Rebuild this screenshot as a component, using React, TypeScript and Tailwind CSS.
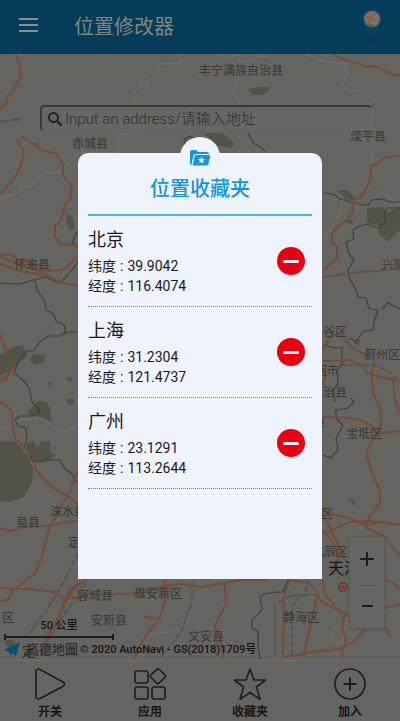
import type { ReactNode } from "react";

const roads = [
  "M16 54 20 66 21 78 15 86 13 92 8 95 7 102 0 108",
  "M333 54 345 60 360 64 366 67 376 66 385 71 393 75 400 75",
  "M22 137 30 142 36 146 42 151 55 153 60 158 63 166 63 175 70 184 72 187 70 200 64 206 64 212 60 222 55 226 55 236 60 244 77 245",
  "M16 140 22 147 24 153 20 168 13 180 0 194",
  "M0 254 10 255 20 260 40 266 47 271 62 270 70 264 77 257",
  "M0 264 20 271 45 275 60 282 77 286",
  "M0 257 22 266 44 272",
  "M0 333 8 357 12 370 0 383",
  "M12 370 6 380 0 377",
  "M0 402 6 405 12 412 12 424 15 438 25 448 33 456 36 470 50 485 60 492 68 496 78 504",
  "M78 471 72 485 68 496 62 505 54 520 50 526",
  "M0 528 12 531 25 526 50 526 64 522 78 521",
  "M50 526 46 540 42 558 35 573 20 585 13 590 8 600 0 601",
  "M0 588 13 589 30 589 45 591 55 592 65 599 80 597 90 594 125 594 145 592 165 586 180 584 200 587 225 583 240 580 267 580",
  "M87 579 75 588 65 600 60 615 50 630 44 643 40 658",
  "M80 582 70 590 64 606 48 640",
  "M165 580 165 602 160 618 150 630 143 640 134 659",
  "M144 616 152 618 160 618",
  "M225 584 226 604 215 625 220 640 224 659",
  "M283 657 284 595 290 580 305 582 312 585 322 602 345 613",
  "M283 657 300 655 310 652 330 650 342 648 355 640 363 632 363 625",
  "M317 596 312 618 306 645 303 657",
  "M345 613 342 628 346 640 342 650 342 659",
  "M323 580 326 596 340 612 360 622",
  "M323 530 335 545 338 560 330 572",
  "M326 520 335 538 345 560",
  "M323 534 350 522 370 521 400 525",
  "M323 510 335 515 350 518 365 525 382 522 400 525",
  "M365 527 385 537 400 556",
  "M385 580 392 582 400 590",
  "M385 608 400 604",
  "M385 628 390 636",
  "M400 155 383 158 380 162 372 166 370 180 367 187 362 195 352 203 353 212 345 222 338 226 332 233 332 243 337 246 337 258 323 270",
  "M323 350 330 337 340 333 345 340 355 350 364 354",
  "M323 361 350 360 362 365 367 373 380 377 400 381",
  "M374 361 372 373 373 393 380 408 381 415 380 430 372 441 367 452 368 460 373 475 380 493 380 503 370 517 365 525",
  "M380 433 400 431",
  "M393 380 395 400 400 412",
  "M323 417 348 418 360 420 370 425 377 431",
  "M323 385 326 375 323 370",
];

const thinRoads = [
  "M181 54 182 63 160 64 155 77 142 85 135 91 134 105",
  "M220 54 228 58 236 64 239 77 234 90 236 97 240 105",
  "M228 58 240 54M236 60 250 61 257 57 270 56",
  "M305 54 318 60 330 62 345 64 347 74 342 85 348 90 360 92 368 102 373 110 372 131",
  "M0 199 15 194 24 188 33 185 38 178 45 173 60 172 68 164 78 153 118 153 118 134 130 135 138 133",
  "M18 420 40 418 50 423 60 432 70 430 77 425",
  "M342 193 341 210 332 228 324 239",
  "M400 206 380 190",
  "M371 150 374 172 365 187 355 192",
  "M0 430 12 425",
  "M140 658 143 640 150 634 170 632 186 626 190 610",
  "M325 600 345 615 360 632M330 639 336 626 350 622 341 645Z",
];

const borders = [
  "M77 332 66 332 60 336 48 336 40 342 34 350 25 352 18 362 14 373 25 382 30 390 32 402 38 408 40 412 32 416 20 416 15 420 18 426 26 428 27 440 24 446 29 452 32 460 40 462 48 460 60 460 64 468 72 474 77 483",
  "M35 280 37 290 45 302 46 310 54 314 56 321 64 325 66 334",
  "M0 283 20 284 30 281 45 277 60 283 68 275 78 262",
  "M77 232 72 242 77 246",
  "M248 133 253 143 262 148 266 153",
  "M185 150 184 140 190 136 196 140",
  "M323 193 333 194 340 199 355 203 363 205 368 205 372 200 383 199 390 202 400 202",
  "M400 208 387 208 384 216 386 222 378 228 366 224 358 227 353 230 354 239 346 242 349 254 354 260 348 270 349 277 356 290 358 297 366 298 369 309 378 310 374 322 373 330",
  "M400 309 388 303 382 309",
  "M373 330 364 331 356 341 348 338",
  "M323 345 335 348 342 347 342 365 337 370 338 384 333 390 335 402",
  "M323 455 331 458 338 450 336 438 343 426 336 418 336 410 348 408 354 402 351 398",
  "M288 580 283 592 276 592 264 594 260 597 262 610 252 620 252 628 258 632 258 645 260 659",
];

const railways = [
  "M78 553 65 580 50 605 30 633",
  "M86 583 62 618 42 648",
  "M192 580 192 602 186 618 182 630 172 644 160 658",
  "M340 365 374 365 388 371 400 383",
  "M275 657 275 604 290 596 305 595 308 580",
  "M292 655 292 606 300 596 318 594",
];

const forests = [
  "M248 89 258 87 270 87 269 91 262 95 252 95Z",
  "M0 121 9 120 8 122 0 123ZM11 119 22 118 18 121 11 121Z",
  "M67 214 72 216 75 227 70 231 66 222Z",
  "M204 133 222 133 234 143 232 148 216 145Z",
  "M337 190 348 190 356 200 345 199Z",
  "M367 208 383 207 387 213 400 206 400 230 387 242 378 232 379 226 367 223Z",
  "M346 220 353 220 353 224 348 223Z",
  "M0 355 12 348 22 345 26 352 28 356 20 362 12 370 0 376Z",
  "M32 354 46 355 44 362 36 365 30 361Z",
  "M27 412 38 401 46 402 50 408 52 423 42 417 30 415Z",
  "M66 400 73 398 75 403 69 406ZM66 377 72 377 72 382 67 381ZM48 383 53 382 50 387Z",
  "M0 441 15 441 27 454 33 468 32 482 24 497 10 502 0 501Z",
  "M26 444 34 441 37 448 42 441 50 442 50 452 56 455 50 460 32 462 28 454Z",
  "M348 498 353 500 357 507 352 503Z",
  "M354 340 360 340 359 345 354 344Z",
  "M4 640 14 640 16 646 8 648Z",
];

const places: [string, number, number][] = [
  ["丰宁满族自治县", 199, 75],
  ["赤城县", 72, 148],
  ["滦平县", 350, 141],
  ["怀来县", 14, 269],
  ["兴隆", 382, 269],
  ["平谷区", 311, 336],
  ["蓟州区", 364, 359],
  ["三河市", 303, 375],
  ["自治县", 311, 397],
  ["县", 313, 427],
  ["宝坻区", 346, 438],
  ["涞水县", 50, 516],
  ["易县", 16, 527],
  ["区", 321, 518],
  ["定兴县", 68, 547],
  ["容城县", 77, 600],
  ["雄安新区", 134, 598],
  ["安新县", 91, 625],
  ["区", 2, 622],
  ["文安县", 188, 641],
  ["静海区", 283, 622],
  ["北辰区", 312, 556],
];

function MapCanvas() {
  return (
    <svg
      className="absolute inset-0 h-full w-full"
      viewBox="0 54 400 606"
      preserveAspectRatio="xMidYMid slice"
      aria-hidden="true"
    >
      <g fill="#505447">
        {forests.map((d) => (
          <path key={d} d={d} />
        ))}
      </g>
      <g fill="none" strokeLinejoin="round">
        <g stroke="#7b716b" strokeWidth="1">
          {thinRoads.map((d) => (
            <path key={d} d={d} />
          ))}
        </g>
        <g stroke="#51514c" strokeWidth="1.5" strokeDasharray="6 2">
          {railways.map((d) => (
            <path key={d} d={d} />
          ))}
        </g>
        <g stroke="#3f3f3b" strokeWidth="1.2">
          {borders.map((d) => (
            <path key={d} d={d} />
          ))}
        </g>
        <path d="M323 277 350 273 385 270 400 268" stroke="#6e5042" strokeWidth="1.8" />
        <g stroke="#774b34" strokeWidth="2">
          {roads.map((d) => (
            <path key={d} d={d} />
          ))}
        </g>
      </g>
      <circle cx="36" cy="145" r="2.5" fill="#774b34" />
      <g
        className="font-['Roboto','Noto_Sans_CJK_SC',sans-serif] text-[12px]"
        fill="#383835"
      >
        {places.map(([name, x, y]) => (
          <text key={name + x} x={x} y={y}>
            {name}
          </text>
        ))}
      </g>
      <g
        className="font-['Roboto','Noto_Sans_CJK_SC',sans-serif] text-[16px]"
        fill="#161616"
      >
        <text x="328" y="574">天津</text>
      </g>
      <text
        x="22"
        y="656"
        className="font-['Roboto','Noto_Sans_CJK_SC',sans-serif] text-[14px]"
        fill="#262624"
      >
        定
      </text>
      <circle cx="343" cy="587" r="4" fill="#666661" stroke="#5a2a22" strokeWidth="1.2" />
      <circle cx="343" cy="587" r="2" fill="#b3211b" />
    </svg>
  );
}

function PinLogo() {
  return (
    <svg className="h-9 w-6" viewBox="0 0 24 36" aria-hidden="true">
      <path d="M12 33C10 24 3 19 3 12a9 9 0 0 1 18 0c0 7-7 12-9 21Z" fill="#06405f" />
      <circle cx="12" cy="10" r="9" fill="none" stroke="#3d6274" strokeWidth="1" strokeDasharray="1 2" />
      <circle cx="12" cy="10" r="8" fill="#7d7267" />
      <path d="M6 7 18 12M15 3 8 16M5 13 11 10" stroke="#8b5f49" strokeWidth="1.6" />
      <path d="M8 17c2-3 5-2 7 0-2 1-5 1-7 0Z" fill="#4d5f4c" />
      <path d="M12 28.500h2M11 31.500h3" stroke="#101a20" strokeWidth="1.5" />
    </svg>
  );
}

function Header() {
  return (
    <header className="flex h-[54px] items-center bg-[#053c59] pr-4 pl-[19px]">
      <button type="button" aria-label="菜单" className="flex w-[19px] flex-col gap-1 pb-1">
        <span className="h-[2px] bg-[#8a8f8c]" />
        <span className="h-[2px] bg-[#8a8f8c]" />
        <span className="h-[2px] bg-[#8a8f8c]" />
      </button>
      <h1 className="ml-9 flex-1 text-xl text-[#84857c]">位置修改器</h1>
      <PinLogo />
    </header>
  );
}

function SearchBox() {
  return (
    <form className="relative mt-[51px] mr-7 ml-10 flex h-[26px] items-center rounded-sm border-t-2 border-l-2 border-t-[#3a3a38] border-l-[#3a3a38] bg-[#666664] pl-[5px]">
      <svg className="h-4 w-4 shrink-0" viewBox="0 0 16 16" fill="none" stroke="#242422" aria-hidden="true">
        <circle cx="6.5" cy="6.5" r="4.5" strokeWidth="2" />
        <path d="m10 10 4.5 4.5" strokeWidth="2.4" />
      </svg>
      <input
        type="text"
        aria-label="地址"
        placeholder="Input an address/请输入地址"
        className="ml-[2px] min-w-0 flex-1 bg-transparent text-[15px] font-light text-[#2e2e2c] outline-none placeholder:text-[#2e2e2c]"
      />
    </form>
  );
}

function ZoomControls() {
  return (
    <div className="absolute right-[15px] bottom-[31px] flex h-[93px] w-9 flex-col rounded-xs border border-[#5a5a56] bg-[#666662] shadow-sm">
      <button type="button" aria-label="放大" className="flex h-12 items-center justify-center pb-1">
        <svg className="h-4 w-4" viewBox="0 0 16 16" stroke="#1e1e1d" strokeWidth="2" aria-hidden="true">
          <path d="M8 1v14M1 8h14" />
        </svg>
      </button>
      <hr className="mx-2 border-[#575753]" />
      <button type="button" aria-label="缩小" className="flex flex-1 items-center justify-center">
        <svg className="h-4 w-4" viewBox="0 0 16 16" stroke="#1e1e1d" strokeWidth="2" aria-hidden="true">
          <path d="M3 7h11" />
        </svg>
      </button>
    </div>
  );
}

function MapFooter() {
  return (
    <div className="relative mt-auto text-[#141414]">
      <div className="ml-1 w-[110px]">
        <p className="text-center text-[11px] leading-4 font-medium">50 公里</p>
        <div className="h-[6px] border-x-2 border-[#1c1c1b]">
          <div className="h-1 border-b-2 border-[#1c1c1b]" />
        </div>
      </div>
      <div className="flex h-5 items-center pl-1 text-[11px] font-medium whitespace-nowrap">
        <svg className="mr-[5px] h-4 w-[17px]" viewBox="0 0 17 16" aria-hidden="true">
          <path d="M0 8 16 0 12 14 8 11 7 14 5 10Z" fill="#0c4f75" />
        </svg>
        <span className="mr-[2px] text-[13px] text-[#2c2c2a]">高德地圖</span>
        <span>© 2020 AutoNavi - GS(2018)1709号</span>
      </div>
    </div>
  );
}

function TabIcon({ children }: { children: ReactNode }) {
  return (
    <svg
      className="h-8 w-8"
      viewBox="0 0 32 32"
      fill="none"
      stroke="#1d1d1d"
      strokeWidth="1.6"
      strokeLinejoin="round"
      aria-hidden="true"
    >
      {children}
    </svg>
  );
}

const tabs: { label: string; icon: ReactNode }[] = [
  {
    label: "开关",
    icon: <path d="M2 3.500v25c0 2 2 3 4 2l23-12c2-1 2-3.500 0-4.500L6 1.500c-2-1-4 0-4 2Z" />,
  },
  {
    label: "应用",
    icon: (
      <>
        <rect x="1" y="3" width="13" height="12" rx="2" />
        <rect x="1" y="19" width="13" height="12" rx="2" />
        <rect x="18" y="19" width="13" height="12" rx="2" />
        <path d="M23.200 1.200 16.600 7.400q-.9.900 0 1.800l6.400 6.200q.9.900 1.800 0l6.600-6.200q.9-.9 0-1.800L25 1.200q-.9-.9-1.800 0Z" />
      </>
    ),
  },
  {
    label: "收藏夹",
    icon: (
      <path d="M16 1 20 12 31.500 12 22.500 19 26 31.300 16 24.500 6 31.300 9.500 19 .5 12 12 12Z" />
    ),
  },
  {
    label: "加入",
    icon: (
      <>
        <circle cx="16" cy="16" r="15" />
        <path d="M16 9.500v13M9.500 16h13" strokeWidth="2" />
      </>
    ),
  },
];

function TabBar() {
  return (
    <nav className="grid h-[61px] grid-cols-4 border-t border-[#70706a] bg-[#646463]">
      {tabs.map((tab) => (
        <button
          key={tab.label}
          type="button"
          className="flex flex-col items-center pt-[7px] text-xs leading-6 font-bold text-[#161616]"
        >
          <TabIcon>{tab.icon}</TabIcon>
          {tab.label}
        </button>
      ))}
    </nav>
  );
}

const favorites = [
  { name: "北京", latitude: "39.9042", longitude: "116.4074" },
  { name: "上海", latitude: "31.2304", longitude: "121.4737" },
  { name: "广州", latitude: "23.1291", longitude: "113.2644" },
];

function Coordinate({ label, value }: { label: string; value: string }) {
  return (
    <div className="flex">
      <dt>
        {label}
        <span className="mx-1">:</span>
      </dt>
      <dd>{value}</dd>
    </div>
  );
}

function FavoritesDialog() {
  return (
    <div className="absolute inset-0 flex items-start justify-center pt-[153px]">
      <section
        role="dialog"
        aria-labelledby="favorites-title"
        className="relative flex h-[426px] w-[61%] min-w-[244px] max-w-sm flex-col rounded-t-[10px] bg-[#eff3fb] px-[10px]"
      >
        <div className="absolute -top-4 left-1/2 flex h-10 w-10 -translate-x-1/2 justify-center rounded-full bg-[#eff3fb] pt-3">
          <svg className="h-[18px] w-5" viewBox="0 0 20 18" aria-hidden="true">
            <path d="M0 15V3q0-2 2-2h4l2 2h9q2 0 2 2H6q-2 0-2.500 2L1.500 16Q0 16 0 15Z" fill="#1296db" />
            <path d="M6 6h13q1.200 0 1 1.200L18.500 15q-.3 1.500-2 1.500H2.500L4.500 7.200Q4.800 6 6 6Z" fill="#1296db" />
            <path d="M19 5.500H6Q4.300 5.500 4 7L2 16" fill="none" stroke="#eff3fb" strokeWidth=".8" />
            <path d="m11.500 7.600 1 2.300 2.500.2-1.900 1.600.6 2.500-2.200-1.300-2.200 1.300.6-2.500L8 10.100l2.500-.2Z" fill="#fff" />
          </svg>
        </div>
        <h2
          id="favorites-title"
          className="relative border-b-2 border-[#41bbe2] pt-[22px] pb-[11px] text-center text-xl font-medium text-[#1296db]"
        >
          位置收藏夹
        </h2>
        <ul>
          {favorites.map((place) => (
            <li
              key={place.name}
              className="flex items-center justify-between border-b border-dotted border-[#7d7f82] pr-[7px]"
            >
              <div className="pt-2 pb-[10px] text-[#1a1a1a]">
                <h3 className="text-lg leading-8">{place.name}</h3>
                <dl className="text-sm">
                  <Coordinate label="纬度" value={place.latitude} />
                  <Coordinate label="经度" value={place.longitude} />
                </dl>
              </div>
              <button
                type="button"
                aria-label={`删除${place.name}`}
                className="flex h-7 w-7 items-center justify-center rounded-full bg-[#e60012]"
              >
                <span className="h-[3px] w-4 rounded-xs bg-[#f4f4f6]" />
              </button>
            </li>
          ))}
        </ul>
      </section>
    </div>
  );
}

export default function App() {
  return (
    <div className="relative flex min-h-screen flex-col overflow-hidden bg-[#646460] font-['Roboto','Noto_Sans_CJK_SC',sans-serif]">
      <Header />
      <main className="relative flex flex-1 flex-col">
        <MapCanvas />
        <SearchBox />
        <MapFooter />
        <ZoomControls />
      </main>
      <TabBar />
      <FavoritesDialog />
    </div>
  );
}
